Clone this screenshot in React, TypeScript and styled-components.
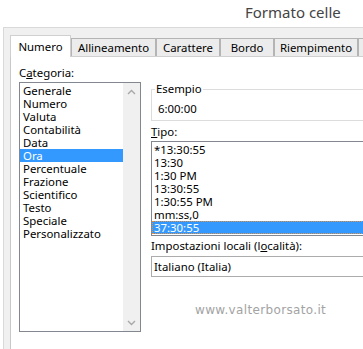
import React from 'react';
import styled, { createGlobalStyle } from 'styled-components';

const GlobalStyle = createGlobalStyle`
  html, body {
    margin: 0;
    padding: 0;
    background: #ffffff;
  }
  body {
    font-family: 'Noto Sans', 'Open Sans', sans-serif;
    font-size: 11.4px;
    color: #000000;
    overflow: hidden;
  }
`;

const Window = styled.div`
  width: 363px;
  height: 349px;
  overflow: hidden;
  display: flex;
  flex-direction: column;
`;

const TitleBar = styled.div`
  flex: none;
  height: 27px;
  padding-left: 245px;
  font-size: 15px;
  line-height: 25px;
  color: #444444;
  white-space: nowrap;
`;

const Dialog = styled.div`
  flex: 1;
  display: flex;
  flex-direction: column;
  margin-left: 3px;
  padding: 7px 0 0 6px;
  border-top: 1px solid #d9d9d9;
  border-left: 1px solid #d9d9d9;
  background: #f0f0f0;
`;

const TabRow = styled.div`
  flex: none;
  display: flex;
  align-items: flex-end;
  height: 21px;
  position: relative;
  z-index: 1;
`;

const Tab = styled.div<{ $w: number; $active?: boolean }>`
  flex: none;
  box-sizing: border-box;
  width: ${(p) => p.$w}px;
  height: ${(p) => (p.$active ? 22 : 18)}px;
  margin-bottom: ${(p) => (p.$active ? -1 : 0)}px;
  padding-top: ${(p) => (p.$active ? 2 : 0)}px;
  border: 1px solid ${(p) => (p.$active ? '#d0d0d0' : '#b4b4b4')};
  border-bottom: none;
  background: ${(p) => (p.$active ? '#ffffff' : '#ececec')};
  text-align: center;
  line-height: 17px;
  white-space: nowrap;
  overflow: hidden;
`;

const Panel = styled.div`
  flex: 1;
  display: flex;
  gap: 10px;
  padding: 8px 0 0 8px;
  border-top: 1px solid #d0d0d0;
  border-left: 1px solid #c8c8c8;
  background: #ffffff;
`;

const LeftColumn = styled.div`
  flex: none;
  width: 122px;
  display: flex;
  flex-direction: column;
`;

const RightColumn = styled.div`
  flex: none;
  width: 250px;
  display: flex;
  flex-direction: column;
`;

const Label = styled.div<{ $top?: number; $bottom?: number }>`
  line-height: 14px;
  margin-top: ${(p) => p.$top ?? 0}px;
  margin-bottom: ${(p) => p.$bottom ?? 0}px;
  white-space: nowrap;
`;

const ListBox = styled.div<{ $h: number }>`
  box-sizing: border-box;
  height: ${(p) => p.$h}px;
  display: flex;
  border: 1px solid #828790;
  background: #ffffff;
  overflow: hidden;
`;

const Items = styled.div<{ $indent: number }>`
  flex: 1;
  min-width: 0;
  padding-top: 1px;
  --indent: ${(p) => p.$indent}px;
`;

const Row = styled.div<{ $selected?: boolean; $focus?: boolean }>`
  height: 13px;
  line-height: 13px;
  padding-left: var(--indent);
  white-space: nowrap;
  background: ${(p) => (p.$selected ? '#3399ff' : 'transparent')};
  color: ${(p) => (p.$selected ? '#ffffff' : '#000000')};
  outline: ${(p) => (p.$focus ? '1px dotted #e8913a' : 'none')};
  outline-offset: -1px;
`;

const ScrollBar = styled.div`
  flex: none;
  width: 17px;
  display: flex;
  flex-direction: column;
  justify-content: space-between;
  background: #f0f0f0;
`;

const ArrowButton = styled.div`
  height: 17px;
  display: flex;
  align-items: center;
  justify-content: center;
`;

const GroupBox = styled.fieldset`
  margin: 17px 0 0 0;
  padding: 0 0 5px 3px;
  border: 1px solid #dcdcdc;
  min-width: 0;
`;

const Legend = styled.legend`
  padding: 0 1px;
  line-height: 14px;
`;

const Sample = styled.div`
  padding: 6px 0 0 3px;
  line-height: 13px;
`;

const Dropdown = styled.div`
  box-sizing: border-box;
  height: 21px;
  padding-left: 2px;
  border: 1px solid #acacac;
  line-height: 19px;
  white-space: nowrap;
`;

const Watermark = styled.div`
  margin-top: 26px;
  padding-left: 44px;
  font-family: 'DejaVu Sans', Verdana, sans-serif;
  font-size: 12px;
  letter-spacing: 0.35px;
  line-height: 14px;
  color: #a3a3a3;
  white-space: nowrap;
`;

const Chevron = ({ up }: { up?: boolean }) => (
  <svg width="9" height="6" viewBox="0 0 9 6">
    <polyline
      points={up ? '1,5 4.5,1.5 8,5' : '1,1 4.5,4.5 8,1'}
      fill="none"
      stroke="#a8a8a8"
      strokeWidth="1.4"
    />
  </svg>
);

const tabs = [
  { name: 'Numero', w: 61, active: true },
  { name: 'Allineamento', w: 85 },
  { name: 'Carattere', w: 64 },
  { name: 'Bordo', w: 54 },
  { name: 'Riempimento', w: 84 },
  { name: 'Protezione', w: 70 },
];

const categories = [
  'Generale',
  'Numero',
  'Valuta',
  'Contabilità',
  'Data',
  'Ora',
  'Percentuale',
  'Frazione',
  'Scientifico',
  'Testo',
  'Speciale',
  'Personalizzato',
];

const types = ['*13:30:55', '13:30', '1:30 PM', '13:30:55', '1:30:55 PM', 'mm:ss,0', '37:30:55'];

export default function App() {
  return (
    <Window>
      <GlobalStyle />
      <TitleBar>Formato celle</TitleBar>
      <Dialog>
        <TabRow>
          {tabs.map((tab) => (
            <Tab key={tab.name} $w={tab.w} $active={tab.active}>
              {tab.name}
            </Tab>
          ))}
        </TabRow>
        <Panel>
          <LeftColumn>
            <Label $top={1} $bottom={2}>
              C<u>a</u>tegoria:
            </Label>
            <ListBox $h={250}>
              <Items $indent={3}>
                {categories.map((c) => (
                  <Row key={c} $selected={c === 'Ora'}>
                    {c}
                  </Row>
                ))}
              </Items>
              <ScrollBar>
                <ArrowButton>
                  <Chevron up />
                </ArrowButton>
                <ArrowButton>
                  <Chevron />
                </ArrowButton>
              </ScrollBar>
            </ListBox>
          </LeftColumn>
          <RightColumn>
            <GroupBox>
              <Legend>Esempio</Legend>
              <Sample>6:00:00</Sample>
            </GroupBox>
            <Label $top={4} $bottom={2}>
              <u>T</u>ipo:
            </Label>
            <ListBox $h={95}>
              <Items $indent={2}>
                {types.map((t, i) => (
                  <Row key={i} $selected={i === 6} $focus={i === 6}>
                    {t}
                  </Row>
                ))}
              </Items>
            </ListBox>
            <Label $top={3} $bottom={3}>
              Impostazioni locali (l<u>o</u>calità):
            </Label>
            <Dropdown>Italiano (Italia)</Dropdown>
            <Watermark>www.valterborsato.it</Watermark>
          </RightColumn>
        </Panel>
      </Dialog>
    </Window>
  );
}
